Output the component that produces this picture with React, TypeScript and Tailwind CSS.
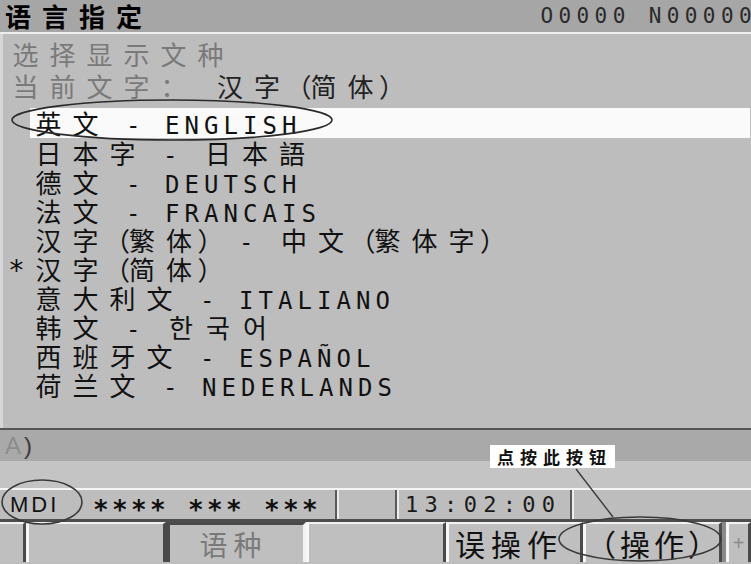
const languages = [
  { text: "日本字 - 日本語" },
  { text: "德文 - DEUTSCH" },
  { text: "法文 - FRANCAIS" },
  { text: "汉字（繁体） - 中文（繁体字）" },
  { text: "汉字（简体）", current: true },
  { text: "意大利文 - ITALIANO" },
  { text: "韩文 - 한국어" },
  { text: "西班牙文 - ESPAÑOL" },
  { text: "荷兰文 - NEDERLANDS" },
];

// one screen cell per character: full width for CJK, half for latin and brackets
function Cells({ text }: { text: string }) {
  return (
    <>
      {Array.from(text).map((ch, i) => {
        const latin = ch.charCodeAt(0) < 0x1100;
        const bracket = ch === "（" || ch === "）";
        return (
          <span
            key={i}
            className={`inline-block shrink-0 leading-[29px] ${
              latin
                ? "w-[19.5px] text-center font-['DejaVu_Sans_Mono',monospace] text-[24px]"
                : bracket
                  ? "w-[19.5px] text-left font-['Noto_Sans_CJK_SC',sans-serif] text-[26px] tracking-[-6.5px]"
                  : "w-[37px] text-center font-['Noto_Sans_CJK_SC','Noto_Sans_CJK_KR',sans-serif] text-[26px]"
            }`}
          >
            {ch === " " ? "\u00a0" : ch}
          </span>
        );
      })}
    </>
  );
}

function SoftKey({
  label,
  width,
  pressed = false,
  className = "",
}: {
  label?: string;
  width: string;
  pressed?: boolean;
  className?: string;
}) {
  return (
    <div
      className={`flex h-full items-center justify-center bg-[#bfbfbf] ${width} ${
        pressed
          ? "border-t-[3px] border-l-[4px] border-r-[3px] border-t-[#4a4a4a] border-l-[#4a4a4a] border-r-[#f2f2f2]"
          : "border-t-2 border-l-[3px] border-r-[3px] border-t-[#f2f2f2] border-l-[#f7f7f7] border-r-[#4a4a4a]"
      } ${className}`}
    >
      {label}
    </div>
  );
}

export default function App() {
  return (
    <div className="relative flex h-[564px] w-[751px] flex-col overflow-hidden bg-[#bdbdbd] font-['Noto_Sans_CJK_SC',sans-serif] text-[#111]">
      {/* title bar */}
      <div className="flex h-[34px] shrink-0 items-center justify-between border-b-2 border-[#eeeeee] bg-[#a6a6a6] pl-[5px]">
        <span className="text-[26px] font-bold leading-[32px] tracking-[11px] text-black">语言指定</span>
        <span className="-mr-[6px] font-['DejaVu_Sans_Mono',monospace] text-[21px] leading-[32px] tracking-[5.4px] text-[#2a2a2a]">
          O0000 N00000
        </span>
      </div>

      {/* main list */}
      <div className="flex h-[394px] shrink-0 flex-col border-l-[3px] border-[#d6d6d6] pt-[3px]">
        <div className="flex h-[32px] items-center pl-[4px] text-[#7a7a7a]">
          <Cells text="选择显示文种" />
        </div>
        <div className="flex h-[32px] items-center pl-[4px]">
          <span className="flex text-[#7a7a7a]">
            <Cells text="当前文字：" />
          </span>
          <span className="flex text-[#222]">
            <Cells text=" 汉字（简体）" />
          </span>
        </div>

        <div className="mt-[7px] flex h-[30px]">
          <div className="w-[27px] shrink-0" />
          <div className="mr-[1px] flex flex-1 items-baseline bg-[#fafafa]">
            <Cells text="英文 - ENGLISH" />
          </div>
        </div>

        {languages.map((lang) => (
          <div key={lang.text} className="flex h-[29px] items-baseline">
            <span className="w-[27px] shrink-0 text-center font-['DejaVu_Sans_Mono',monospace] text-[28px] leading-[29px]">
              {lang.current ? "*" : "\u00a0"}
            </span>
            <Cells text={lang.text} />
          </div>
        ))}
      </div>

      {/* key-in line */}
      <div className="h-[2px] shrink-0 bg-[#555]" />
      <div className="flex h-[31px] shrink-0 items-center bg-[#a9a9a9] pl-[5px] font-['Liberation_Sans',sans-serif] text-[24px] leading-none">
        <span className="text-[#8c8c8c]">A</span>
        <span className="ml-[3px] text-[#3a3a3a]">)</span>
      </div>
      <div className="h-[29px] shrink-0 border-b-2 border-[#f4f4f4] bg-[#c4c4c4]" />

      {/* status row */}
      <div className="flex h-[29px] shrink-0 bg-[#bdbdbd]">
        <div className="flex w-[337px] items-center border-r-2 border-[#5a5a5a]">
          <span className="ml-[10px] font-['Liberation_Sans',sans-serif] text-[22px] leading-none tracking-[3px]">MDI</span>
          <span className="ml-[32px] flex translate-y-[5px] font-['DejaVu_Sans_Mono',monospace] text-[26px] font-bold leading-none">
            {Array.from("**** *** ***").map((ch, i) => (
              <span key={i} className="inline-block w-[19px] text-center">
                {ch === " " ? "\u00a0" : ch}
              </span>
            ))}
          </span>
        </div>
        <div className="w-[60px] border-l-2 border-r-2 border-l-[#ececec] border-r-[#5a5a5a]" />
        <div className="flex w-[175px] items-center border-l-2 border-r-2 border-l-[#ececec] border-r-[#5a5a5a] pl-[6px]">
          <span className="font-['DejaVu_Sans_Mono',monospace] text-[22px] leading-none tracking-[6.3px] text-[#1a1a1a]">
            13:02:00
          </span>
        </div>
        <div className="flex-1 border-l-2 border-[#ececec]" />
      </div>

      {/* soft keys */}
      <div className="h-[3px] shrink-0 bg-[#4d4d4d]" />
      <div className="flex h-[40px] shrink-0 bg-[#8a8a8a] font-['Noto_Sans_CJK_SC',sans-serif]">
        <div className="h-full w-[26px] border-t-2 border-r-[3px] border-t-[#f2f2f2] border-r-[#4a4a4a] bg-[#bfbfbf]" />
        <SoftKey width="w-[140px]" />
        <SoftKey
          width="w-[140px]"
          pressed
          label="语种"
          className="pr-[6px] text-[28px] leading-none tracking-[6px] text-[#7a7a7a]"
        />
        <SoftKey width="w-[140px]" />
        <SoftKey
          width="w-[137px]"
          label="误操作"
          className="justify-start pl-[6px] text-[30px] leading-none tracking-[6px] text-[#111]"
        />
        <SoftKey width="w-[139px]" label="（操作）" className="text-[30px] leading-none tracking-[4px] text-[#111]" />
        <SoftKey
          width="flex-1"
          label="+"
          className="ml-[4px] font-['Liberation_Sans',sans-serif] text-[20px] leading-none text-[#8a8a8a]"
        />
      </div>

      {/* annotations drawn over the screen */}
      <svg className="pointer-events-none absolute left-0 top-0" width="751" height="564" viewBox="0 0 751 564">
        <ellipse cx="172" cy="120" rx="160" ry="20" fill="none" stroke="#2b2b2b" strokeWidth="1.6" />
        <ellipse cx="42" cy="502" rx="40" ry="22" fill="none" stroke="#3a3a3a" strokeWidth="1.6" />
        <ellipse cx="640" cy="539" rx="81" ry="22" fill="none" stroke="#3a3a3a" strokeWidth="1.6" />
        <line x1="576" y1="469" x2="613" y2="517" stroke="#3a3a3a" strokeWidth="1.4" />
      </svg>
      <div className="absolute left-[490px] top-[445px] flex h-[23px] w-[125px] items-center justify-center bg-white pl-[4px] text-[17px] font-bold leading-none tracking-[6px] text-[#111]">
        点按此按钮
      </div>
    </div>
  );
}
